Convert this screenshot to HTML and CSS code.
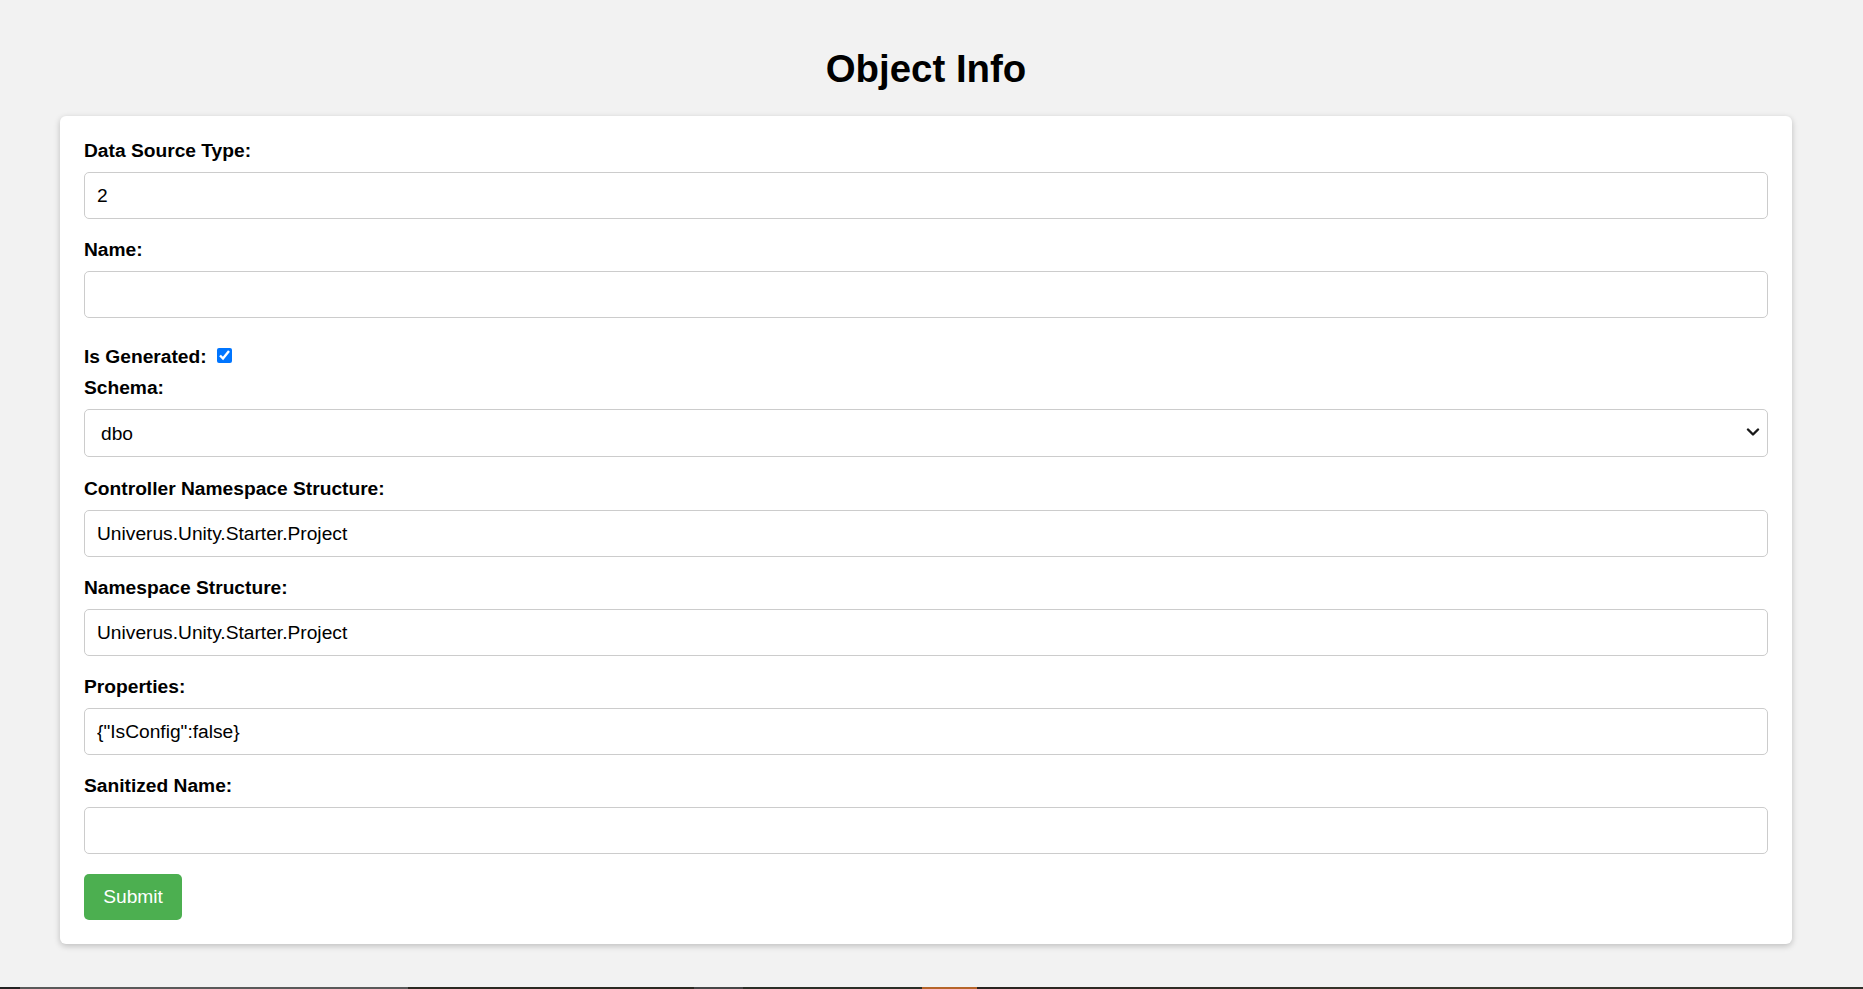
FILE: index.html
```html
<!DOCTYPE html>
<html lang="en">
<head>
<meta charset="utf-8">
<title>Object Info</title>
<link rel="stylesheet" href="styles.css">
</head>
<body>
<div class="page">
  <h1 class="title">Object Info</h1>
  <form class="card">
    <label class="field-label" for="dst">Data Source Type:</label>
    <input class="field-input" id="dst" type="text" value="2">

    <label class="field-label" for="name">Name:</label>
    <input class="field-input" id="name" type="text" value="">

    <div class="check-row">
      <label class="check-label" for="gen">Is Generated:</label>
      <input class="check-box" id="gen" type="checkbox" checked>
    </div>

    <label class="field-label" for="schema">Schema:</label>
    <div class="select-wrap">
      <select class="field-select" id="schema">
        <option>dbo</option>
      </select>
      <svg class="chevron" width="14" height="9" viewBox="0 0 14 9" aria-hidden="true">
        <path d="M2 1.5 L7 6.5 L12 1.5" fill="none" stroke="#1a1a1a" stroke-width="2.4" stroke-linecap="round" stroke-linejoin="round"/>
      </svg>
    </div>

    <label class="field-label" for="cns">Controller Namespace Structure:</label>
    <input class="field-input" id="cns" type="text" value="Univerus.Unity.Starter.Project">

    <label class="field-label" for="ns">Namespace Structure:</label>
    <input class="field-input" id="ns" type="text" value="Univerus.Unity.Starter.Project">

    <label class="field-label" for="props">Properties:</label>
    <input class="field-input" id="props" type="text" value='{"IsConfig":false}'>

    <label class="field-label" for="san">Sanitized Name:</label>
    <input class="field-input" id="san" type="text" value="">

    <button class="submit-btn" type="button">Submit</button>
  </form>
</div>
<div class="taskbar">
  <span class="seg seg-a"></span>
  <span class="seg seg-b"></span>
  <span class="seg seg-c"></span>
  <span class="seg seg-d"></span>
  <span class="seg seg-e"></span>
  <span class="seg seg-f"></span>
  <span class="seg seg-g"></span>
</div>
</body>
</html>
```

FILE: styles.css
```css
* {
  box-sizing: border-box;
}

html, body {
  margin: 0;
  padding: 0;
}

body {
  background: #f2f2f2;
  font-family: "Liberation Sans", Arial, sans-serif;
  color: #000;
  min-height: 989px;
  display: flex;
  flex-direction: column;
}

.page {
  padding: 47px 71px 0 60px;
}

.title {
  margin: 0 0 25px;
  text-align: center;
  font-size: 38.4px;
  line-height: 44px;
  font-weight: bold;
}

.card {
  background: #fff;
  border-radius: 6px;
  padding: 24px;
  box-shadow: 0 2px 6px rgba(0, 0, 0, 0.22);
}

.field-label {
  display: block;
  font-size: 19.2px;
  line-height: 22px;
  font-weight: bold;
  margin-bottom: 10px;
}

.field-input {
  display: block;
  width: 100%;
  height: 47px;
  padding: 0 12px;
  border: 1px solid #cccccc;
  border-radius: 5px;
  font-family: "Liberation Sans", Arial, sans-serif;
  font-size: 19.2px;
  color: #000;
  background: #fff;
  margin: 0 0 20px;
  outline: none;
}

.check-row {
  display: flex;
  align-items: flex-start;
  margin-top: 28px;
  margin-bottom: 9px;
  height: 22px;
}

.check-label {
  font-size: 19.2px;
  line-height: 22px;
  font-weight: bold;
}

.check-box {
  width: 15px;
  height: 15px;
  margin: 2px 0 0 10px;
  accent-color: #0075ff;
}

.select-wrap {
  position: relative;
  margin-bottom: 21px;
}

.field-select {
  display: block;
  width: 100%;
  height: 48px;
  padding: 0 40px 0 16px;
  border: 1px solid #cccccc;
  border-radius: 5px;
  font-family: "Liberation Sans", Arial, sans-serif;
  font-size: 19.2px;
  color: #000;
  background: #fff;
  -webkit-appearance: none;
  appearance: none;
  outline: none;
}

.chevron {
  position: absolute;
  right: 8px;
  top: 19px;
  pointer-events: none;
}

.submit-btn {
  display: block;
  height: 46px;
  padding: 0 19.2px;
  background: #4caf50;
  color: #fff;
  border: none;
  border-radius: 5px;
  font-family: "Liberation Sans", Arial, sans-serif;
  font-size: 19.2px;
  cursor: pointer;
}

.taskbar {
  margin-top: auto;
  height: 2px;
  display: flex;
}

.seg {
  display: block;
  height: 2px;
}

.seg-a { width: 20px; background: #222222; }
.seg-b { width: 388px; background: #5a5a5a; }
.seg-c { width: 286px; background: #2b2a22; }
.seg-d { width: 49px; background: #474747; }
.seg-e { width: 179px; background: #2b2f27; }
.seg-f { width: 55px; background: #b5652a; }
.seg-g { flex: 1; background: linear-gradient(90deg, #2a2420, #3a3a2e 60%, #30302a); }
```
